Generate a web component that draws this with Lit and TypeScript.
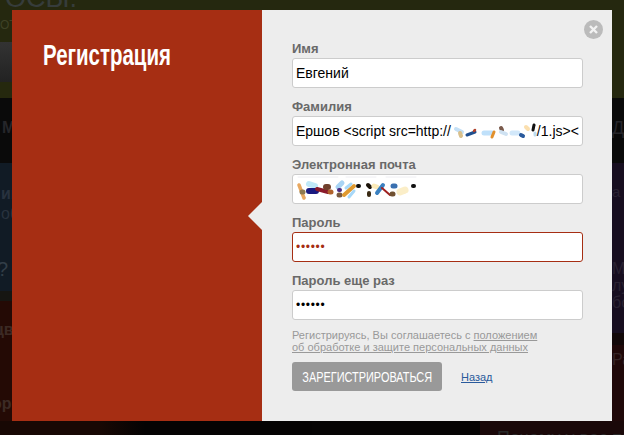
import { LitElement, html, css, svg } from "lit";
import { customElement } from "lit/decorators.js";

const line = (d: string, c: string, w = 3.5) =>
  svg`<path d=${d} stroke=${c} stroke-width=${w} fill="none" stroke-linecap="round" stroke-linejoin="round" />`;

@customElement("app-root")
export class AppRoot extends LitElement {
  static styles = css`
    :host {
      display: block;
      position: relative;
      width: 624px;
      height: 435px;
      overflow: hidden;
      background: #070404;
      font-family: "Liberation Sans", Arial, sans-serif;
    }
    .page {
      display: grid;
      grid-template-columns: 312px 312px;
      height: 435px;
    }
    .col {
      display: flex;
      flex-direction: column;
      overflow: hidden;
    }
    .b {
      box-sizing: border-box;
      white-space: nowrap;
      overflow: hidden;
      flex: none;
      font-size: 16px;
      line-height: 20px;
    }
    .t-olive { height: 42px; background: #25280f; }
    .t-gray { height: 40px; background: linear-gradient(#333, #222); }
    .t-olive2 { height: 16px; background: #25280e; }
    .l-black {
      height: 65px;
      background: #0a0a0a;
      color: #26262a;
      font-weight: bold;
      padding: 20px 0 0 2px;
    }
    .l-blue {
      height: 128px;
      background: #111b25;
      color: #28323e;
      padding: 21px 0 0 1px;
    }
    .bold { font-weight: bold; }
    .q { font-size: 20px; margin: 35px 0 0 -4px; color: #323e48; }
    .l-sep { height: 10px; background: #161612; }
    .l-red {
      height: 120px;
      background: #240a05;
      color: #3c2a24;
      font-weight: bold;
      padding: 19px 0 0;
    }
    .cut1 { margin-left: -6px; }
    .cut2 { margin: 54px 0 0 -8px; }
    .l-dark { height: 14px; background: linear-gradient(90deg, #180804, #180804 100px, #050303 145px); }
    .r-olive { height: 98px; background: #25280f; }
    .r-black {
      height: 65px;
      background: #0a0a0a;
      color: #26262a;
      font-size: 18px;
      padding: 20px 0 0 300px;
    }
    .r-purple {
      height: 170px;
      background: #170e20;
      color: #2a2232;
      padding: 20px 0 0 300px;
      line-height: 17px;
      font-size: 15px;
    }
    .r-purple .more { margin-top: 60px; font-size: 16px; }
    .r-sep { height: 12px; background: #120809; }
    .r-maroon {
      height: 76px;
      background: #1f0809;
      color: #352426;
      font-size: 16px;
      padding: 5px 0 0 300px;
    }
    .r-bottom {
      height: 14px;
      background: linear-gradient(90deg, #060404 168px, #1a0809 168px);
      color: #282828;
      font-size: 18px;
      line-height: 20px;
      padding: 7px 0 0 185px;
    }
    .head {
      font-size: 27px;
      line-height: 27px;
      color: #363c3b;
      margin: -15px 0 0 5px;
    }
    .sub {
      font-size: 12px;
      line-height: 14px;
      margin-top: 6px;
      color: #3e4226;
    }
    .modal {
      position: absolute;
      left: 12px;
      top: 10px;
      width: 600px;
      height: 411px;
      display: flex;
      background: #ededed;
    }
    .side {
      width: 250px;
      flex: none;
      background: #a62e13;
      padding: 30px 0 0 31px;
      box-sizing: border-box;
      position: relative;
    }
    .side h1 {
      margin: 0;
      font-size: 29px;
      line-height: 30px;
      font-weight: bold;
      color: #fff;
      white-space: nowrap;
      width: 127px;
    }
    .squeeze-title {
      display: inline-block;
      transform: scaleX(0.705);
      transform-origin: left center;
    }
    .notch {
      position: absolute;
      right: 0;
      top: 192px;
      width: 14px;
      height: 28px;
      background: #ededed;
      clip-path: polygon(100% 0, 0 50%, 100% 100%);
    }
    .main {
      flex: 1;
      padding: 30px 30px 0;
      position: relative;
    }
    .field { display: block; margin-bottom: 10px; }
    .label {
      display: block;
      font-size: 13px;
      line-height: 18px;
      font-weight: bold;
      color: #696969;
    }
    .input {
      display: flex;
      align-items: center;
      width: 100%;
      height: 30px;
      box-sizing: border-box;
      border: 1px solid #ccc;
      border-radius: 3px;
      background: #fff;
      padding: 0 3px;
      margin: 0;
      font: 14px "Liberation Sans", Arial, sans-serif;
      color: #000;
      white-space: nowrap;
      overflow: hidden;
      outline: none;
    }
    .input svg { flex: none; display: block; }
    .pw {
      font-size: 12px;
      letter-spacing: 0.7px;
    }
    .error {
      border-color: #a62e13;
      color: #a62e13;
    }
    .note {
      margin: -1px 0 0;
      font-size: 11px;
      line-height: 12px;
      color: #999;
    }
    .note a { color: #999; text-decoration: underline; }
    .actions {
      display: flex;
      align-items: center;
      gap: 19px;
      margin-top: 9px;
    }
    button {
      width: 150px;
      height: 29px;
      border: 0;
      border-radius: 3px;
      background: #999;
      color: #fff;
      padding: 0;
      font-family: "Liberation Sans", Arial, sans-serif;
      font-size: 14px;
      display: flex;
      align-items: center;
      justify-content: center;
      overflow: hidden;
    }
    .squeeze-btn {
      display: inline-block;
      flex: none;
      white-space: nowrap;
      transform: scaleX(0.78);
      transform-origin: center;
    }
    .back {
      font-size: 11px;
      color: #2a5a9c;
      text-decoration: underline;
    }
    .close {
      position: absolute;
      right: 10px;
      top: 10px;
      width: 19px;
      height: 19px;
      display: block;
    }
  `;

  render() {
    return html`
      <div class="page">
        <div class="col">
          <div class="b t-olive">
            <div class="head">ОСЫ.</div>
            <div class="sub">ОТЕ</div>
          </div>
          <div class="b t-gray"></div>
          <div class="b t-olive2"></div>
          <div class="b l-black">М</div>
          <div class="b l-blue">
            <span class="bold">ин</span><br />об
            <div class="q">?</div>
          </div>
          <div class="b l-sep"></div>
          <div class="b l-red">
            <div class="cut1">цв</div>
            <div class="cut2">ор</div>
          </div>
          <div class="b l-dark"></div>
        </div>
        <div class="col">
          <div class="b r-olive"></div>
          <div class="b r-black">Д</div>
          <div class="b r-purple">
            а с
            <div class="more">Мо<br />лу<br />бо</div>
          </div>
          <div class="b r-sep"></div>
          <div class="b r-maroon">Ра</div>
          <div class="b r-bottom">Почему у вас так</div>
        </div>
      </div>

      <div class="modal">
        <div class="side">
          <h1><span class="squeeze-title">Регистрация</span></h1>
          <div class="notch"></div>
        </div>
        <div class="main">
          <svg class="close" viewBox="0 0 19 19" aria-label="Закрыть">
            <circle cx="9.5" cy="9.5" r="9.5" fill="#bbb" />
            <path d="M6 6l7 7M13 6l-7 7" stroke="#f2f2f2" stroke-width="2.4" fill="none" />
          </svg>
          <label class="field">
            <span class="label">Имя</span>
            <input class="input" value="Евгений" />
          </label>
          <div class="field">
            <span class="label">Фамилия</span>
            <div class="input">
              <span>Ершов &lt;script src=http://</span>
              <svg width="86" height="16" viewBox="0 0 86 16">
                ${line("M5 6l6 3", "#c4e0f6", 4)}
                ${line("M9 10l1 3", "#d9c08c", 4)}
                ${line("M16 12l8-3", "#1f4f8f", 3)}
                ${line("M23 8l1-1", "#b0402a", 2.5)}
                ${line("M33 10h8", "#bfe0fa", 5)}
                ${line("M43 9l-2 5", "#e2902c", 3)}
                ${line("M50 5l1 2", "#7a5a4c", 4)}
                ${line("M50 9l5 2", "#cfe2f2", 4)}
                ${line("M61 10h6", "#d2e8fa", 5)}
                ${line("M70 12l2 1", "#2a5a9c", 4)}
                ${line("M75 4l2 2", "#fbdfae", 4)}
                ${line("M83 2l-1 5", "#111", 3)}
                ${line("M84 10l0 2", "#bcdcf2", 3)}
              </svg>
              <span>/1.js&gt;&lt;</span>
            </div>
          </div>
          <div class="field">
            <span class="label">Электронная почта</span>
            <div class="input">
              <svg width="122" height="28" viewBox="0 0 122 28">
                ${line("M2 2h40M50 2h30M90 2h30", "#eeeef2", 1)}
                ${line("M3 10l5 13", "#e8a860", 3.5)}
                ${line("M6 17h1", "#8f7a50", 5)}
                ${line("M13 9l6 2", "#bfe8f8", 6)}
                ${line("M13 16l7 0", "#1a1a80", 6)}
                ${line("M21 14l11 3", "#8a1a2a", 4)}
                ${line("M30 12h2", "#70402c", 6)}
                ${line("M34 17h1", "#b0622c", 5)}
                ${line("M42 12l4-4", "#a8d4f4", 5)}
                ${line("M43 15h1", "#4a2a80", 4)}
                ${line("M43 20h1", "#7a5a40", 5)}
                ${line("M48 20l10-9", "#e09a30", 4)}
                ${line("M50 13l5-4", "#a8d8f8", 3)}
                ${line("M53 22l5-6", "#a8d8f8", 3)}
                ${line("M62 11h1", "#111", 4)}
                ${line("M72 10l2 2", "#1a1208", 4)}
                ${line("M73 18v2", "#3a2a14", 4)}
                ${line("M78 11l3 1", "#fbeab8", 5)}
                ${line("M81 18l6-8", "#3a80c0", 4)}
                ${line("M86 13l8 7", "#a02020", 2)}
                ${line("M96 19h1", "#705030", 5)}
                ${line("M97 11h2", "#3a70b0", 5)}
                ${line("M104 17l5-2", "#fbeec8", 7)}
                ${line("M117 11h1", "#111", 4)}
              </svg>
            </div>
          </div>
          <label class="field">
            <span class="label">Пароль</span>
            <input class="input pw error" type="password" value="123456" />
          </label>
          <label class="field">
            <span class="label">Пароль еще раз</span>
            <input class="input pw" type="password" value="123456" />
          </label>
          <p class="note">
            Регистрируясь, Вы соглашаетесь с <a href="#">положением</a><br />
            <a href="#">об обработке и защите персональных данных</a>
          </p>
          <div class="actions">
            <button><span class="squeeze-btn">ЗАРЕГИСТРИРОВАТЬСЯ</span></button>
            <a class="back" href="#">Назад</a>
          </div>
        </div>
      </div>
    `;
  }
}
